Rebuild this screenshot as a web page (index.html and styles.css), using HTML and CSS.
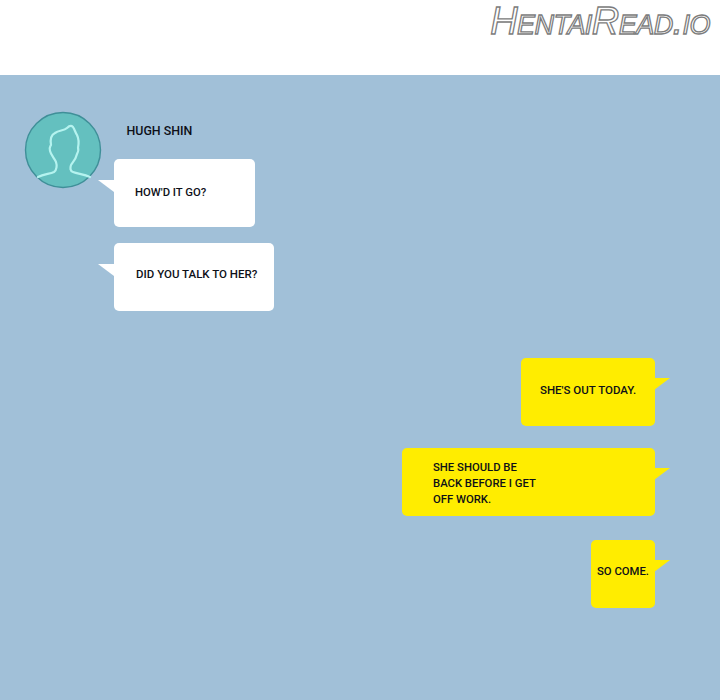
FILE: index.html
```html
<!DOCTYPE html>
<html lang="en">
<head>
    <meta charset="UTF-8">
    <meta name="viewport" content="width=device-width, initial-scale=1.0">
    <title>Hugh Shin</title>
    <link rel="stylesheet" href="styles.css">
</head>
<body>

<header class="site-header">
    <span class="watermark">HentaiRead.io</span>
</header>

<main class="chat">
    <section class="incoming">
        <svg class="avatar" viewBox="0 0 78 78" width="78" height="78">
            <circle cx="39" cy="39" r="37.5" fill="#64c0bf" stroke="#3f8f98" stroke-width="1.4"/>
            <path d="M14 66 C20 63 26 63 30 61 C33 59 33 54 32 51 C30 47 27 44 26 40 C25 36 26 36 27 34 C26 28 27 24 31 22 C35 19 40 20 43 17 C45 15 47 14 49 16 C51 19 51 21 53 24 C55 28 55 32 54 37 C55 39 54 41 53 43 C52 48 49 51 47 54 C46 57 46 60 49 61 C54 63 60 63 66 66" fill="none" stroke="#b5f3ef" stroke-width="2.2" stroke-linecap="round" stroke-linejoin="round"/>
        </svg>
        <div class="incoming-col">
            <div class="name">HUGH SHIN</div>
            <div class="bubble white w1"><p>HOW'D IT GO?</p></div>
            <div class="bubble white w2"><p>DID YOU TALK TO HER?</p></div>
        </div>
    </section>

    <section class="outgoing">
        <div class="bubble yellow y1"><p>SHE'S OUT TODAY.</p></div>
        <div class="bubble yellow y2"><p>SHE SHOULD BE<br>BACK BEFORE I GET<br>OFF WORK.</p></div>
        <div class="bubble yellow y3"><p>SO COME.</p></div>
    </section>
</main>

</body>
</html>
```

FILE: styles.css
```css
html, body { margin: 0; padding: 0; }
body { width: 720px; height: 700px; overflow: hidden; background: #a1c0d8; font-family: Roboto, "Liberation Sans", sans-serif; color: #0e1018; }

.site-header { height: 75px; box-sizing: border-box; background: white; display: flex; justify-content: flex-end; align-items: flex-start; padding-right: 10px; }
.watermark { font-family: "Liberation Sans", sans-serif; font-style: italic; font-variant: small-caps; font-size: 38px; line-height: normal; letter-spacing: -0.55px; color: white; -webkit-text-stroke: 1.3px #7c7c7c; }

.chat { padding-top: 36px; }

.incoming { display: flex; align-items: flex-start; padding-left: 24px; gap: 12px; }
.avatar { flex: none; }
.incoming-col { display: flex; flex-direction: column; align-items: flex-start; }
.name { font-size: 12.4px; font-weight: 500; line-height: 16px; margin: 12px 0 20px 12.5px; }

.outgoing { display: flex; flex-direction: column; align-items: flex-end; padding-right: 65px; margin-top: 47px; }

.bubble { position: relative; height: 68px; box-sizing: border-box; border-radius: 5px; font-size: 11.3px; font-weight: 500; line-height: 16px; }
.bubble p { margin: 0; }
.bubble::after { content: ""; position: absolute; width: 16px; height: 12px; }

.white { background: white; }
.white::after { left: -16px; top: 21px; background: white; clip-path: polygon(0 0, 100% 0, 100% 100%); }
.yellow { background: #ffed00; }
.yellow::after { right: -15px; top: 20px; background: #ffed00; clip-path: polygon(0 0, 100% 0, 0 100%); }

.w1 { width: 141px; padding: 26px 0 0 21px; }
.w2 { width: 160px; margin-top: 16px; padding: 23px 0 0 22px; font-size: 11.5px; }
.y1 { width: 134px; padding: 24px 0 0 19px; font-size: 11.5px; }
.y2 { width: 253px; margin-top: 22px; padding: 12px 0 0 31px; }
.y3 { width: 64px; margin-top: 24px; padding: 24px 0 0 6px; }
```
